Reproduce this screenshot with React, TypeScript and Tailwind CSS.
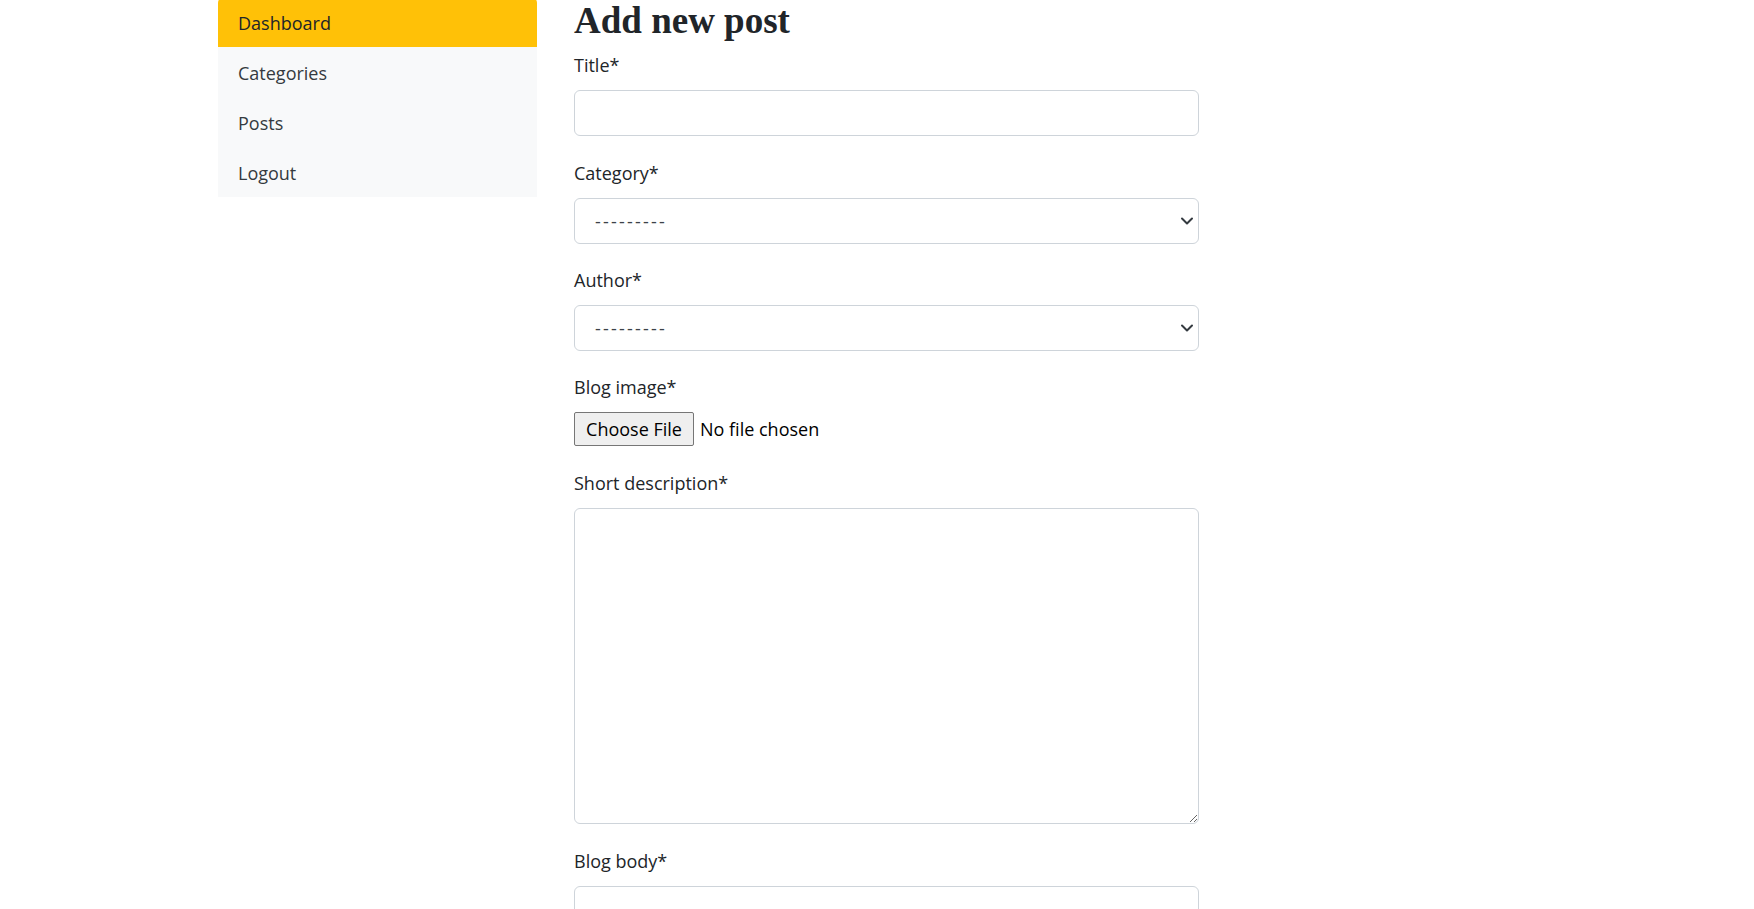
import React from "react";

const Chevron = () => (
  <svg
    className="pointer-events-none absolute right-[5px] top-1/2 -translate-y-1/2"
    width="14"
    height="10"
    viewBox="0 0 16 12"
    fill="none"
  >
    <path d="m2 3 6 6 6-6" stroke="#343a40" strokeWidth="2.4" strokeLinecap="round" strokeLinejoin="round" />
  </svg>
);

const Label = ({ children }: { children: React.ReactNode }) => (
  <label className="block h-[27px] text-[18px] leading-[27px] text-[#212529] mb-[11px]">{children}</label>
);

const SelectField = () => (
  <div className="relative h-[46px] mb-[23px]">
    <select className="appearance-none w-full h-full rounded-[6px] border border-[#ced4da] bg-white pl-[20px] pr-[36px] text-[18px] tracking-[2.2px] text-[#3d4248] outline-none">
      <option>---------</option>
    </select>
    <Chevron />
  </div>
);

export default function App() {
  return (
    <div
      className="w-full h-[909px] overflow-hidden bg-white text-[#212529]"
      style={{ fontFamily: '"Open Sans", "Noto Sans", sans-serif' }}
    >
      <div className="flex items-start pl-[218px]">
        <nav className="w-[319px] -mt-[3px] bg-[#f8f9fa] text-[18px]">
          <a className="flex items-center h-[50px] px-[20px] pt-[2px] bg-[#ffc107] rounded-t-[6px] text-[#212529]">Dashboard</a>
          <a className="flex items-center h-[50px] px-[20px] pt-[2px] text-[#343a40]">Categories</a>
          <a className="flex items-center h-[50px] px-[20px] pt-[2px] text-[#343a40]">Posts</a>
          <a className="flex items-center h-[50px] px-[20px] pt-[2px] text-[#343a40]">Logout</a>
        </nav>
        <main className="ml-[37px] w-[625px] pt-[1px]">
          <h2
            className="h-[40px] text-[37px] leading-[40px] font-bold text-[#212529] mb-[11px]"
            style={{ fontFamily: '"Liberation Serif", "DejaVu Serif", serif' }}
          >
            Add new post
          </h2>
          <Label>Title*</Label>
          <input
            type="text"
            className="block w-full h-[46px] mb-[24px] rounded-[6px] border border-[#ced4da] bg-white px-[14px] text-[18px] outline-none"
          />
          <Label>Category*</Label>
          <SelectField />
          <Label>Author*</Label>
          <SelectField />
          <Label>Blog image*</Label>
          <div className="flex items-center h-[34px] mb-[24px]">
            <button className="h-[34px] w-[120px] border border-[#767676] rounded-[2px] bg-[#efefef] text-[18px] text-black leading-none">
              Choose File
            </button>
            <span className="ml-[6px] text-[18px] text-black">No file chosen</span>
          </div>
          <Label>Short description*</Label>
          <textarea className="block w-full h-[316px] mb-[24px] rounded-[6px] border border-[#ced4da] bg-white px-[14px] py-[7px] text-[18px] outline-none" />
          <Label>Blog body*</Label>
          <textarea className="block w-full h-[200px] rounded-[6px] border border-[#ced4da] bg-white px-[14px] py-[7px] text-[18px] outline-none" />
        </main>
      </div>
    </div>
  );
}
